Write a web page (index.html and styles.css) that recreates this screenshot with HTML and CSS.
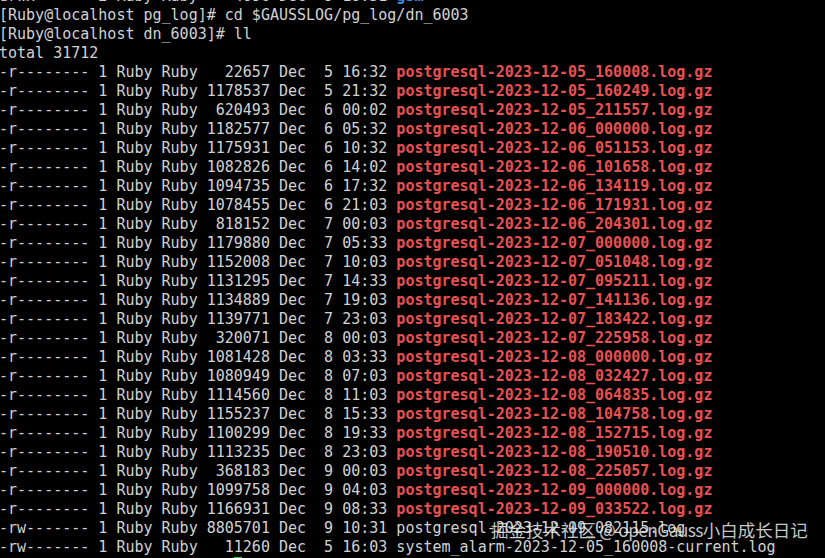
FILE: index.html
```html
<!DOCTYPE html>
<html>
<head>
<meta charset="utf-8">
<link rel="stylesheet" href="styles.css">
</head>
<body>
<div class="term">
<pre class="screen">drwx------ 2 Ruby Ruby    4096 Dec  9 10:31 <b class="dir">gsm</b>
[Ruby@localhost pg_log]# cd $GAUSSLOG/pg_log/dn_6003
[Ruby@localhost dn_6003]# ll
total 31712
-r-------- 1 Ruby Ruby   22657 Dec  5 16:32 <b class="gz">postgresql-2023-12-05_160008.log.gz</b>
-r-------- 1 Ruby Ruby 1178537 Dec  5 21:32 <b class="gz">postgresql-2023-12-05_160249.log.gz</b>
-r-------- 1 Ruby Ruby  620493 Dec  6 00:02 <b class="gz">postgresql-2023-12-05_211557.log.gz</b>
-r-------- 1 Ruby Ruby 1182577 Dec  6 05:32 <b class="gz">postgresql-2023-12-06_000000.log.gz</b>
-r-------- 1 Ruby Ruby 1175931 Dec  6 10:32 <b class="gz">postgresql-2023-12-06_051153.log.gz</b>
-r-------- 1 Ruby Ruby 1082826 Dec  6 14:02 <b class="gz">postgresql-2023-12-06_101658.log.gz</b>
-r-------- 1 Ruby Ruby 1094735 Dec  6 17:32 <b class="gz">postgresql-2023-12-06_134119.log.gz</b>
-r-------- 1 Ruby Ruby 1078455 Dec  6 21:03 <b class="gz">postgresql-2023-12-06_171931.log.gz</b>
-r-------- 1 Ruby Ruby  818152 Dec  7 00:03 <b class="gz">postgresql-2023-12-06_204301.log.gz</b>
-r-------- 1 Ruby Ruby 1179880 Dec  7 05:33 <b class="gz">postgresql-2023-12-07_000000.log.gz</b>
-r-------- 1 Ruby Ruby 1152008 Dec  7 10:03 <b class="gz">postgresql-2023-12-07_051048.log.gz</b>
-r-------- 1 Ruby Ruby 1131295 Dec  7 14:33 <b class="gz">postgresql-2023-12-07_095211.log.gz</b>
-r-------- 1 Ruby Ruby 1134889 Dec  7 19:03 <b class="gz">postgresql-2023-12-07_141136.log.gz</b>
-r-------- 1 Ruby Ruby 1139771 Dec  7 23:03 <b class="gz">postgresql-2023-12-07_183422.log.gz</b>
-r-------- 1 Ruby Ruby  320071 Dec  8 00:03 <b class="gz">postgresql-2023-12-07_225958.log.gz</b>
-r-------- 1 Ruby Ruby 1081428 Dec  8 03:33 <b class="gz">postgresql-2023-12-08_000000.log.gz</b>
-r-------- 1 Ruby Ruby 1080949 Dec  8 07:03 <b class="gz">postgresql-2023-12-08_032427.log.gz</b>
-r-------- 1 Ruby Ruby 1114560 Dec  8 11:03 <b class="gz">postgresql-2023-12-08_064835.log.gz</b>
-r-------- 1 Ruby Ruby 1155237 Dec  8 15:33 <b class="gz">postgresql-2023-12-08_104758.log.gz</b>
-r-------- 1 Ruby Ruby 1100299 Dec  8 19:33 <b class="gz">postgresql-2023-12-08_152715.log.gz</b>
-r-------- 1 Ruby Ruby 1113235 Dec  8 23:03 <b class="gz">postgresql-2023-12-08_190510.log.gz</b>
-r-------- 1 Ruby Ruby  368183 Dec  9 00:03 <b class="gz">postgresql-2023-12-08_225057.log.gz</b>
-r-------- 1 Ruby Ruby 1099758 Dec  9 04:03 <b class="gz">postgresql-2023-12-09_000000.log.gz</b>
-r-------- 1 Ruby Ruby 1166931 Dec  9 08:33 <b class="gz">postgresql-2023-12-09_033522.log.gz</b>
-rw------- 1 Ruby Ruby 8805701 Dec  9 10:31 postgresql-2023-12-09_082115.log
-rw------- 1 Ruby Ruby   11260 Dec  5 16:03 system_alarm-2023-12-05_160008-current.log
<span class="prompt">[Ruby@localhost dn_6003]# </span><span class="cursor"> </span></pre>
<div class="watermark">掘金技术社区<span class="wm-latin"> @ openGauss</span>小白成长日记</div>
</div>
</body>
</html>
```

FILE: styles.css
```css
html, body {
  margin: 0;
  padding: 0;
  background: #000;
  overflow: hidden;
}

.term {
  position: relative;
  width: 825px;
  height: 558px;
  overflow: hidden;
  background: #000;
}

.screen {
  margin: -13px 0 0 -1px;
  padding: 0;
  font-family: "DejaVu Sans Mono", "Liberation Mono", monospace;
  font-size: 15px;
  line-height: 19px;
  color: #d2d2d2;
  white-space: pre;
}

.gz {
  color: #ea5050;
  font-weight: bold;
}

.dir {
  color: #3a8fe0;
  font-weight: bold;
}

.prompt {
  color: #d2d2d2;
}

.cursor {
  display: inline-block;
  width: 8px;
  height: 19px;
  vertical-align: top;
  background: #33cc44;
}

.watermark {
  position: absolute;
  left: 491px;
  top: 518px;
  font-family: "Noto Sans CJK SC", "Noto Sans", sans-serif;
  font-size: 17.5px;
  line-height: 24px;
  color: rgba(235, 235, 235, 0.85);
  white-space: nowrap;
}

.wm-latin {
  letter-spacing: -0.7px;
}
```
